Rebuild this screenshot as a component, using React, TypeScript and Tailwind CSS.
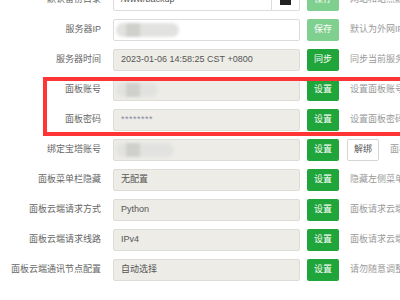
import React from "react";

type Row = {
  label: string;
  value?: string;
  masked?: number;
  white?: boolean;
  folder?: boolean;
  btn: string;
  btnLight?: boolean;
  unbind?: boolean;
  desc: string;
};

const rows: Row[] = [
  { label: "默认备份目录", value: "/www/backup", white: true, folder: true, btn: "保存", btnLight: true, desc: "网站和站点默认备份目录" },
  { label: "服务器IP", masked: 63, white: true, btn: "保存", btnLight: true, desc: "默认为外网IP，若您在本地" },
  { label: "服务器时间", value: "2023-01-06 14:58:25 CST +0800", btn: "同步", desc: "同步当前服务器时间" },
  { label: "面板账号", masked: 42, btn: "设置", desc: "设置面板账号" },
  { label: "面板密码", value: "********", btn: "设置", desc: "设置面板密码" },
  { label: "绑定宝塔账号", masked: 58, btn: "设置", unbind: true, desc: "面板绑定的宝塔账号" },
  { label: "面板菜单栏隐藏", value: "无配置", btn: "设置", desc: "隐藏左侧菜单栏" },
  { label: "面板云端请求方式", value: "Python", btn: "设置", desc: "面板请求云端的方式" },
  { label: "面板云端请求线路", value: "IPv4", btn: "设置", desc: "面板请求云端的线路" },
  { label: "面板云端通讯节点配置", value: "自动选择", btn: "设置", desc: "请勿随意调整节点" },
];

const Blur = ({ w }: { w: number }) => (
  <div className="flex items-center h-[14px] ml-[2px] blur-[1.5px]">
    <div className="h-[14px] rounded-full bg-[#e2e2e0] flex items-center pl-[10px]" style={{ width: w }}>
      <div className="h-[14px] w-[14px] bg-[#cfcfcc]" />
    </div>
  </div>
);

const App = () => {
  return (
    <div
      className="relative w-[400px] h-[300px] overflow-hidden bg-white text-[9px]"
      style={{ fontFamily: '"Liberation Sans", "Noto Sans CJK SC", sans-serif' }}
    >
      <div className="-mt-[15px] flex flex-col">
        {rows.map((r) => (
          <div key={r.label} className="flex items-center h-[30px] shrink-0">
            <div className="w-[101px] shrink-0 text-right text-[#666] whitespace-nowrap">{r.label}</div>
            <div
              className={`ml-[12px] w-[187px] h-[22px] shrink-0 flex items-center rounded-[2px] border ${
                r.white ? "bg-white border-[#dcdcdc]" : "bg-[#edece7] border-[#dedcd6]"
              }`}
            >
              {r.masked ? (
                <Blur w={r.masked} />
              ) : (
                <span className={`pl-[7px] flex-1 ${r.value === "********" ? "text-[#8a8fa0] tracking-[0.5px]" : "text-[#555]"}`}>
                  {r.value}
                </span>
              )}
              {r.folder && (
                <div className="ml-auto w-[28px] h-full border-l border-[#dcdcdc] flex items-center justify-center">
                  <svg width="11" height="9" viewBox="0 0 11 9">
                    <path d="M0 1h4l1 1h6v7H0z" fill="#222" />
                  </svg>
                </div>
              )}
            </div>
            <div
              className={`ml-[7px] w-[32px] h-[22px] shrink-0 rounded-[2px] flex items-center justify-center text-white ${
                r.btnLight ? "bg-[#7fcf8e]" : "bg-[#20a53a]"
              }`}
            >
              {r.btn}
            </div>
            {r.unbind && (
              <div className="ml-[8px] w-[32px] h-[22px] shrink-0 rounded-[2px] border border-[#d5d5d5] bg-white flex items-center justify-center text-[#555]">
                解绑
              </div>
            )}
            <div className="ml-[11px] text-[#999] whitespace-nowrap">{r.desc}</div>
          </div>
        ))}
      </div>
      <div className="absolute left-[43px] top-[77px] w-[400px] h-[59px] border-[4px] border-[#ff3434] pointer-events-none" />
    </div>
  );
};

export default App;
